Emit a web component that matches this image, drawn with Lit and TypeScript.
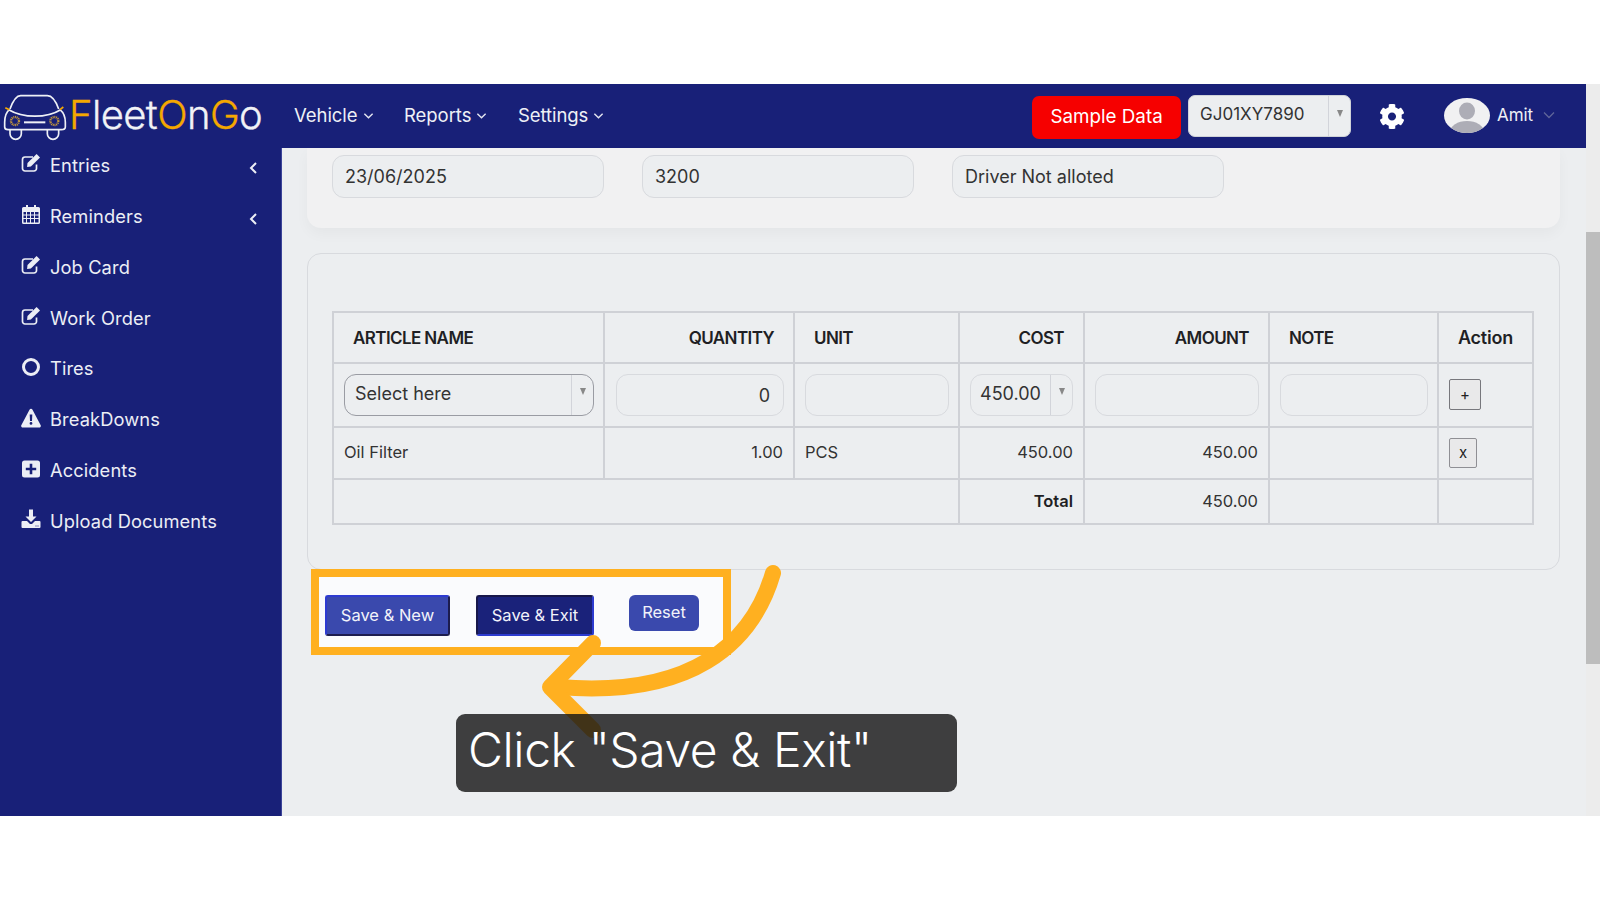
import { LitElement, html, css, svg } from "lit";
import { customElement } from "lit/decorators.js";

const edit = svg`<path d="M15.500 11.500v4A2.500 2.500 0 0 1 13 18H4a2.500 2.500 0 0 1-2.500-2.500v-9A2.500 2.500 0 0 1 4 4h8" fill="none" stroke="currentColor" stroke-width="1.700"/><path d="M6.500 10 15.600 1l3.400 3.400-9.100 9.100-3.800.6z" fill="currentColor"/>`;
const calendar = svg`<path fill-rule="evenodd" fill="currentColor" d="M2.500 3H5V1h2v2h6V1h2v2h2.500A1.500 1.500 0 0 1 19 4.500V18.500A1.500 1.500 0 0 1 17.500 20h-15A1.500 1.500 0 0 1 1 18.500V4.500A1.500 1.500 0 0 1 2.500 3zM2.500 8v2.500H5V8zM6 8v2.500h3V8zM10 8v2.500h3V8zM14 8v2.500h3.500V8zM2.500 11.500V14H5v-2.500zM6 11.500V14h3v-2.500zM10 11.500V14h3v-2.500zM14 11.500V14h3.500v-2.500zM2.500 15v3.500H5V15zM6 15v3.500h3V15zM10 15v3.500h3V15zM14 15v3.500h3.500V15z"/>`;
const ring = svg`<circle cx="10" cy="10" r="7.500" fill="none" stroke="currentColor" stroke-width="3"/>`;
const warn = svg`<path fill-rule="evenodd" fill="currentColor" d="M10 .8c.7 0 1.200.4 1.500 1l8.200 15.400c.5 1-.2 2.200-1.400 2.200H1.700C.5 19.400-.2 18.200.3 17.200L8.500 1.800c.3-.6.800-1 1.500-1zM8.700 6.500l.3 6.500h2l.3-6.500zM10 14a1.400 1.400 0 1 0 0 2.800A1.400 1.400 0 0 0 10 14z"/>`;
const plus = svg`<path fill-rule="evenodd" fill="currentColor" d="M3.500 1.500h13a2.500 2.500 0 0 1 2.500 2.500v12a2.500 2.500 0 0 1-2.500 2.500h-13A2.500 2.500 0 0 1 1 16V4a2.500 2.500 0 0 1 2.500-2.500zM8.700 4.800v4H4.800v2.400h3.900v4h2.600v-4h3.900V8.800h-3.900v-4z"/>`;
const upload = svg`<path fill="currentColor" d="M8 .5h4v7h3.500L10 13 4.500 7.500H8z"/><path fill-rule="evenodd" fill="currentColor" d="M1.500 12H6l3 3h2l3-3h4.500A1 1 0 0 1 19.500 13v5A1 1 0 0 1 18.500 19h-17A1 1 0 0 1 .5 18v-5a1 1 0 0 1 1-1zM14.500 16.500v1h1v-1zM16.500 16.500v1h1v-1z"/>`;

const gear = "M487.4 315.7l-42.6-24.6c4.3-23.2 4.3-47 0-70.2l42.6-24.6c4.900-2.800 7.100-8.600 5.500-14-11.100-35.600-30-67.800-54.700-94.600-3.800-4.100-10-5.100-14.800-2.300L380.800 110c-17.900-15.400-38.500-27.300-60.800-35.100V25.800c0-5.600-3.900-10.500-9.400-11.700-36.700-8.200-74.300-7.800-109.200 0-5.500 1.200-9.400 6.100-9.400 11.700V75c-22.200 7.900-42.800 19.800-60.800 35.100L88.700 85.500c-4.900-2.800-11-1.900-14.800 2.300-24.700 26.700-43.600 58.900-54.700 94.600-1.700 5.400.6 11.200 5.500 14L67.300 221c-4.300 23.200-4.300 47 0 70.200l-42.600 24.600c-4.900 2.800-7.100 8.600-5.500 14 11.100 35.600 30 67.800 54.700 94.600 3.800 4.100 10 5.100 14.800 2.300l42.600-24.600c17.900 15.400 38.500 27.300 60.800 35.100v49.200c0 5.600 3.900 10.500 9.400 11.700 36.700 8.200 74.300 7.800 109.200 0 5.500-1.200 9.400-6.100 9.400-11.700v-49.200c22.200-7.900 42.800-19.800 60.800-35.100l42.600 24.600c4.900 2.800 11 1.900 14.800-2.300 24.700-26.700 43.600-58.900 54.700-94.600 1.500-5.500-.7-11.300-5.600-14.100zM256 336c-44.100 0-80-35.900-80-80s35.900-80 80-80 80 35.900 80 80-35.900 80-80 80z";

const menu: [string, any, boolean][] = [
  ["Entries", edit, true],
  ["Reminders", calendar, true],
  ["Job Card", edit, false],
  ["Work Order", edit, false],
  ["Tires", ring, false],
  ["BreakDowns", warn, false],
  ["Accidents", plus, false],
  ["Upload Documents", upload, false],
];

const chev = html`<svg class="chev" viewBox="0 0 12 8"><path d="M1.500 1.500 6 6l4.500-4.500" fill="none" stroke="currentColor" stroke-width="1.500"/></svg>`;

@customElement("app-root")
export class AppRoot extends LitElement {
  static styles = css`
    :host { display: block; position: relative; height: 900px; background: #fff; overflow: hidden;
      font-family: Inter, "Liberation Sans", sans-serif; color: #333; }
    * { box-sizing: border-box; }
    .frame { margin-top: 84px; height: 732px; display: flex; background: #eceef0; }
    .viewport { flex: 1; min-width: 0; display: flex; flex-direction: column; }
    .scrollbar { width: 14px; background: #ececec; padding-top: 148px; }
    .thumb { height: 432px; background: #bdbdbd; }
    header { height: 64px; background: #182078; display: flex; align-items: center; color: #eef0f6; flex: none; }
    .logo { display: flex; align-items: center; width: 294px; flex: none; }
    .car { width: 70px; height: 57px; flex: none; margin-top: -6px; }
    .wordmark { font-size: 40px; font-weight: 300; letter-spacing: -.6px; color: #f1f2f6; margin: -2px 0 0 -1px; line-height: 1; -webkit-text-stroke: .3px currentColor; }
    .wordmark b { font-weight: 300; color: #f5a800; }
    .nav { display: flex; align-items: center; font-size: 18.500px; letter-spacing: -.05px; margin-right: 30.500px; margin-top: -3px; gap: 5px; }
    .chev { width: 11px; height: 8px; color: #e4e6f0; margin-top: 2px; }
    .spacer { flex: 1; }
    .sample { width: 149px; height: 43px; background: #f60000; color: #fff; border-radius: 7px; font-size: 18.800px; display: flex; align-items: center; justify-content: center; margin-top: 3px; padding-bottom: 2px; }
    .veh { width: 163px; height: 42px; margin-left: 7px; background: #eceef0; border: 1px solid #cfd2d8; border-radius: 7px; display: flex; align-items: stretch; color: #333; font-size: 17px; margin-top: -1px; }
    .veh span { flex: 1; padding: 0 0 4px 11px; display: flex; align-items: center; }
    .drop { width: 22px; border-left: 1px solid #d2d4da; display: flex; justify-content: center; padding-top: 14px; flex: none; }
    .drop i { width: 0; height: 0; border-left: 3.500px solid transparent; border-right: 3.500px solid transparent; border-top: 7px solid #888; }
    .gear { width: 26px; height: 27px; margin-left: 28px; flex: none; }
    .avatar { width: 46px; height: 35px; margin-left: 39px; flex: none; margin-top: -1px; }
    .amit { font-size: 17px; margin: -2px 10px 0 7px; letter-spacing: -.1px; }
    .uchev { width: 12px; height: 8px; color: #5f6599; margin-right: 31px; margin-top: -3px; }
    .body { flex: 1; min-height: 0; display: flex; }
    aside { width: 282px; flex: none; background: #182078; border-right: 1px solid #3c4499; overflow: hidden; }
    .menu { margin-top: -8.500px; }
    .item { height: 50.860px; display: flex; align-items: center; padding-left: 21px; color: #eceef5; font-size: 18.300px; letter-spacing: .1px; }
    .item svg.ic { width: 20px; height: 20px; margin-right: 9px; margin-top: -3px; flex: none; }
    .item span { flex: 1; }
    .back { width: 9px; height: 14px; margin-right: 23px; margin-top: 6px; color: #eceef5; }
    main { flex: 1; min-width: 0; padding: 0 26px 0 25px; }
    .card1 { height: 80px; background: #f1f1f2; border-radius: 0 0 14px 14px; box-shadow: 0 6px 14px rgba(0,0,0,.035); padding: 7px 25px; display: flex; gap: 38px; }
    .field { height: 43px; width: 272px; background: #eceef0; border: 1px solid #d8dade; border-radius: 12px; font-size: 18px; display: flex; align-items: center; padding-left: 12px; }
    .card2 { height: 317px; margin-top: 25px; border: 1px solid #d8dade; border-radius: 14px; padding: 57px 24px 0 24px; }
    table { border-collapse: collapse; table-layout: fixed; width: 1200px; font-size: 16.500px; }
    td, th { border: 2px solid #cfd1d6; padding: 0 10px 2px; }
    th { font-weight: 600; font-size: 17px; letter-spacing: -.6px; color: #1f1f24; padding: 0 19px; }
    .act { font-size: 18px; letter-spacing: -.2px; padding: 0; }
    .l { text-align: left; }
    .r { text-align: right; }
    .c { text-align: center; }
    tr.h { height: 51px; }
    tr.f { height: 64px; }
    tr.f td { padding-bottom: 0; }
    tr.d { height: 52px; }
    tr.t { height: 45px; }
    .tot { font-weight: 600; color: #1f1f24; }
    .inp { height: 42px; border: 1px solid #d8dade; border-radius: 12px; display: flex; align-items: center; font-size: 18px; margin-right: -1px; }
    .inp.qty { justify-content: flex-end; padding-right: 13px; margin-left: 1px; }
    .inp.sel { border: 1.500px solid #9a9ca3; align-items: stretch; }
    .inp.sel span { flex: 1; padding-left: 10px; display: flex; align-items: center; padding-bottom: 3px; }
    .inp.sel .drop, .inp.cost .drop { padding-top: 13px; }
    .inp.cost { align-items: stretch; margin-right: 0; }
    .inp.cost span { flex: 1; padding-left: 9px; display: flex; align-items: center; padding-bottom: 3px; }
    .mini { display: flex; align-items: center; justify-content: center; background: #e9e9ea; border: 1px solid #77777c; border-radius: 2px; color: #222; font-size: 15px; width: 32px; height: 31px; margin-top: -1px; }
    .mini.x { width: 28px; height: 30px; border-color: #8f8f94; margin-top: 1px; }
    .actions { margin: -1px 0 0 4px; width: 420px; height: 86px; border: 8px solid #ffb020; background: #fafbfd; padding: 18px 0 0 6px; display: flex; align-items: flex-start; position: relative; }
    .btn { display: flex; align-items: center; justify-content: center; color: #f2f3fa; font-size: 16.500px; height: 41px; background: #3a49ad; padding-bottom: 1px; }
    .new { width: 125px; border-radius: 3px; border: 2px solid; border-color: #2d3bd0 #1c1c4e #1c1c4e #2d3bd0; margin-right: 26px; }
    .exit { width: 118px; border-radius: 3px; border: 2px solid; border-color: #17174a #2d3bd0 #2d3bd0 #17174a; background: #1a227a; margin-right: 35px; }
    .reset { width: 70px; height: 36px; border-radius: 6px; padding-bottom: 3px; }
    .overlay { position: absolute; left: 0; top: 0; width: 1600px; height: 900px; pointer-events: none; }
    .tip { position: absolute; left: 456px; top: 714px; width: 501px; height: 78px; border-radius: 9px; background: rgba(23,23,23,.82); color: #fff; font-size: 48px; display: flex; align-items: center; padding: 0 0 7px 12px; font-weight: 300; letter-spacing: -.4px; white-space: nowrap; }
  `;

  render() {
    return html`
      <div class="frame">
        <div class="viewport">
          <header>
            <div class="logo">
              <svg class="car" viewBox="0 0 210 171" fill="none" stroke="#eef0f6" stroke-width="5">
                <path d="M30 72C38 50 48 32 62 32H142C156 32 168 50 176 72"/>
                <path d="M26 74C70 100 140 100 182 74"/>
                <path d="M28 74C16 84 14 95 14 112V126Q14 134 24 134H184Q196 134 196 126V112C196 95 192 84 180 74"/>
                <path d="M16 68 28 74M190 66 180 74" stroke="#f5a800"/>
                <path d="M30 134V146A17 17 0 0 0 64 146V134M142 134V146A17 17 0 0 0 176 146V134"/>
                <path d="M72 112H136" stroke-width="6"/>
                <circle cx="45" cy="108" r="12" stroke="#c79a3a" stroke-width="7" stroke-dasharray="3 2"/>
                <circle cx="163" cy="108" r="12" stroke="#c79a3a" stroke-width="7" stroke-dasharray="3 2"/>
              </svg>
              <div class="wordmark"><b>F</b>leet<b>O</b>n<b>G</b>o</div>
            </div>
            <div class="nav">Vehicle ${chev}</div>
            <div class="nav">Reports ${chev}</div>
            <div class="nav">Settings ${chev}</div>
            <div class="spacer"></div>
            <div class="sample">Sample Data</div>
            <div class="veh"><span>GJ01XY7890</span><div class="drop"><i></i></div></div>
            <svg class="gear" viewBox="0 0 512 512"><path fill="#fff" d="${gear}"/></svg>
            <svg class="avatar" viewBox="0 0 46 35">
              <defs><clipPath id="av"><ellipse cx="23" cy="17.500" rx="23" ry="17.500"/></clipPath></defs>
              <ellipse cx="23" cy="17.500" rx="23" ry="17.500" fill="#f1f1f2"/>
              <g clip-path="url(#av)" fill="#adadb6">
                <ellipse cx="23" cy="13" rx="8" ry="8.500"/>
                <ellipse cx="23" cy="34" rx="17" ry="11"/>
              </g>
            </svg>
            <div class="amit">Amit</div>
            <svg class="uchev" viewBox="0 0 12 8"><path d="M1 1.500 6 6.500l5-5" fill="none" stroke="currentColor" stroke-width="1.300"/></svg>
          </header>
          <div class="body">
            <aside>
              <div class="menu">
                ${menu.map(([label, icon, back]) => html`
                  <div class="item">
                    <svg class="ic" viewBox="0 0 20 20">${icon}</svg>
                    <span>${label}</span>
                    ${back ? html`<svg class="back" viewBox="0 0 9 14"><path d="M7 2 2 7l5 5" fill="none" stroke="currentColor" stroke-width="2"/></svg>` : ""}
                  </div>`)}
              </div>
            </aside>
            <main>
              <div class="card1">
                <div class="field">23/06/2025</div>
                <div class="field">3200</div>
                <div class="field">Driver Not alloted</div>
              </div>
              <div class="card2">
                <table>
                  <colgroup>
                    <col style="width:271px"><col style="width:190px"><col style="width:165px"><col style="width:125px"><col style="width:185px"><col style="width:169px"><col style="width:95px">
                  </colgroup>
                  <tr class="h">
                    <th class="l">ARTICLE NAME</th><th class="r">QUANTITY</th><th class="l">UNIT</th><th class="r">COST</th><th class="r">AMOUNT</th><th class="l">NOTE</th><th class="c act">Action</th>
                  </tr>
                  <tr class="f">
                    <td><div class="inp sel"><span>Select here</span><div class="drop"><i></i></div></div></td>
                    <td><div class="inp qty">0</div></td>
                    <td><div class="inp"></div></td>
                    <td><div class="inp cost"><span>450.00</span><div class="drop"><i></i></div></div></td>
                    <td><div class="inp"></div></td>
                    <td><div class="inp"></div></td>
                    <td><div class="mini">+</div></td>
                  </tr>
                  <tr class="d">
                    <td>Oil Filter</td><td class="r">1.00</td><td>PCS</td><td class="r">450.00</td><td class="r">450.00</td><td></td>
                    <td><div class="mini x">x</div></td>
                  </tr>
                  <tr class="t">
                    <td colspan="3"></td><td class="r tot">Total</td><td class="r">450.00</td><td></td><td></td>
                  </tr>
                </table>
              </div>
              <div class="actions">
                <div class="btn new">Save &amp; New</div>
                <div class="btn exit">Save &amp; Exit</div>
                <div class="btn reset">Reset</div>
              </div>
            </main>
          </div>
        </div>
        <div class="scrollbar"><div class="thumb"></div></div>
      </div>
      <svg class="overlay" viewBox="0 0 1600 900" fill="none" stroke="#ffb020" stroke-linecap="round" stroke-linejoin="round">
        <path d="M773 573C752 645 690 698 558 687" stroke-width="16"/>
        <path d="M593 643 550 687 593 730" stroke-width="16"/>
      </svg>
      <div class="tip">Click "Save &amp; Exit"</div>
    `;
  }
}
